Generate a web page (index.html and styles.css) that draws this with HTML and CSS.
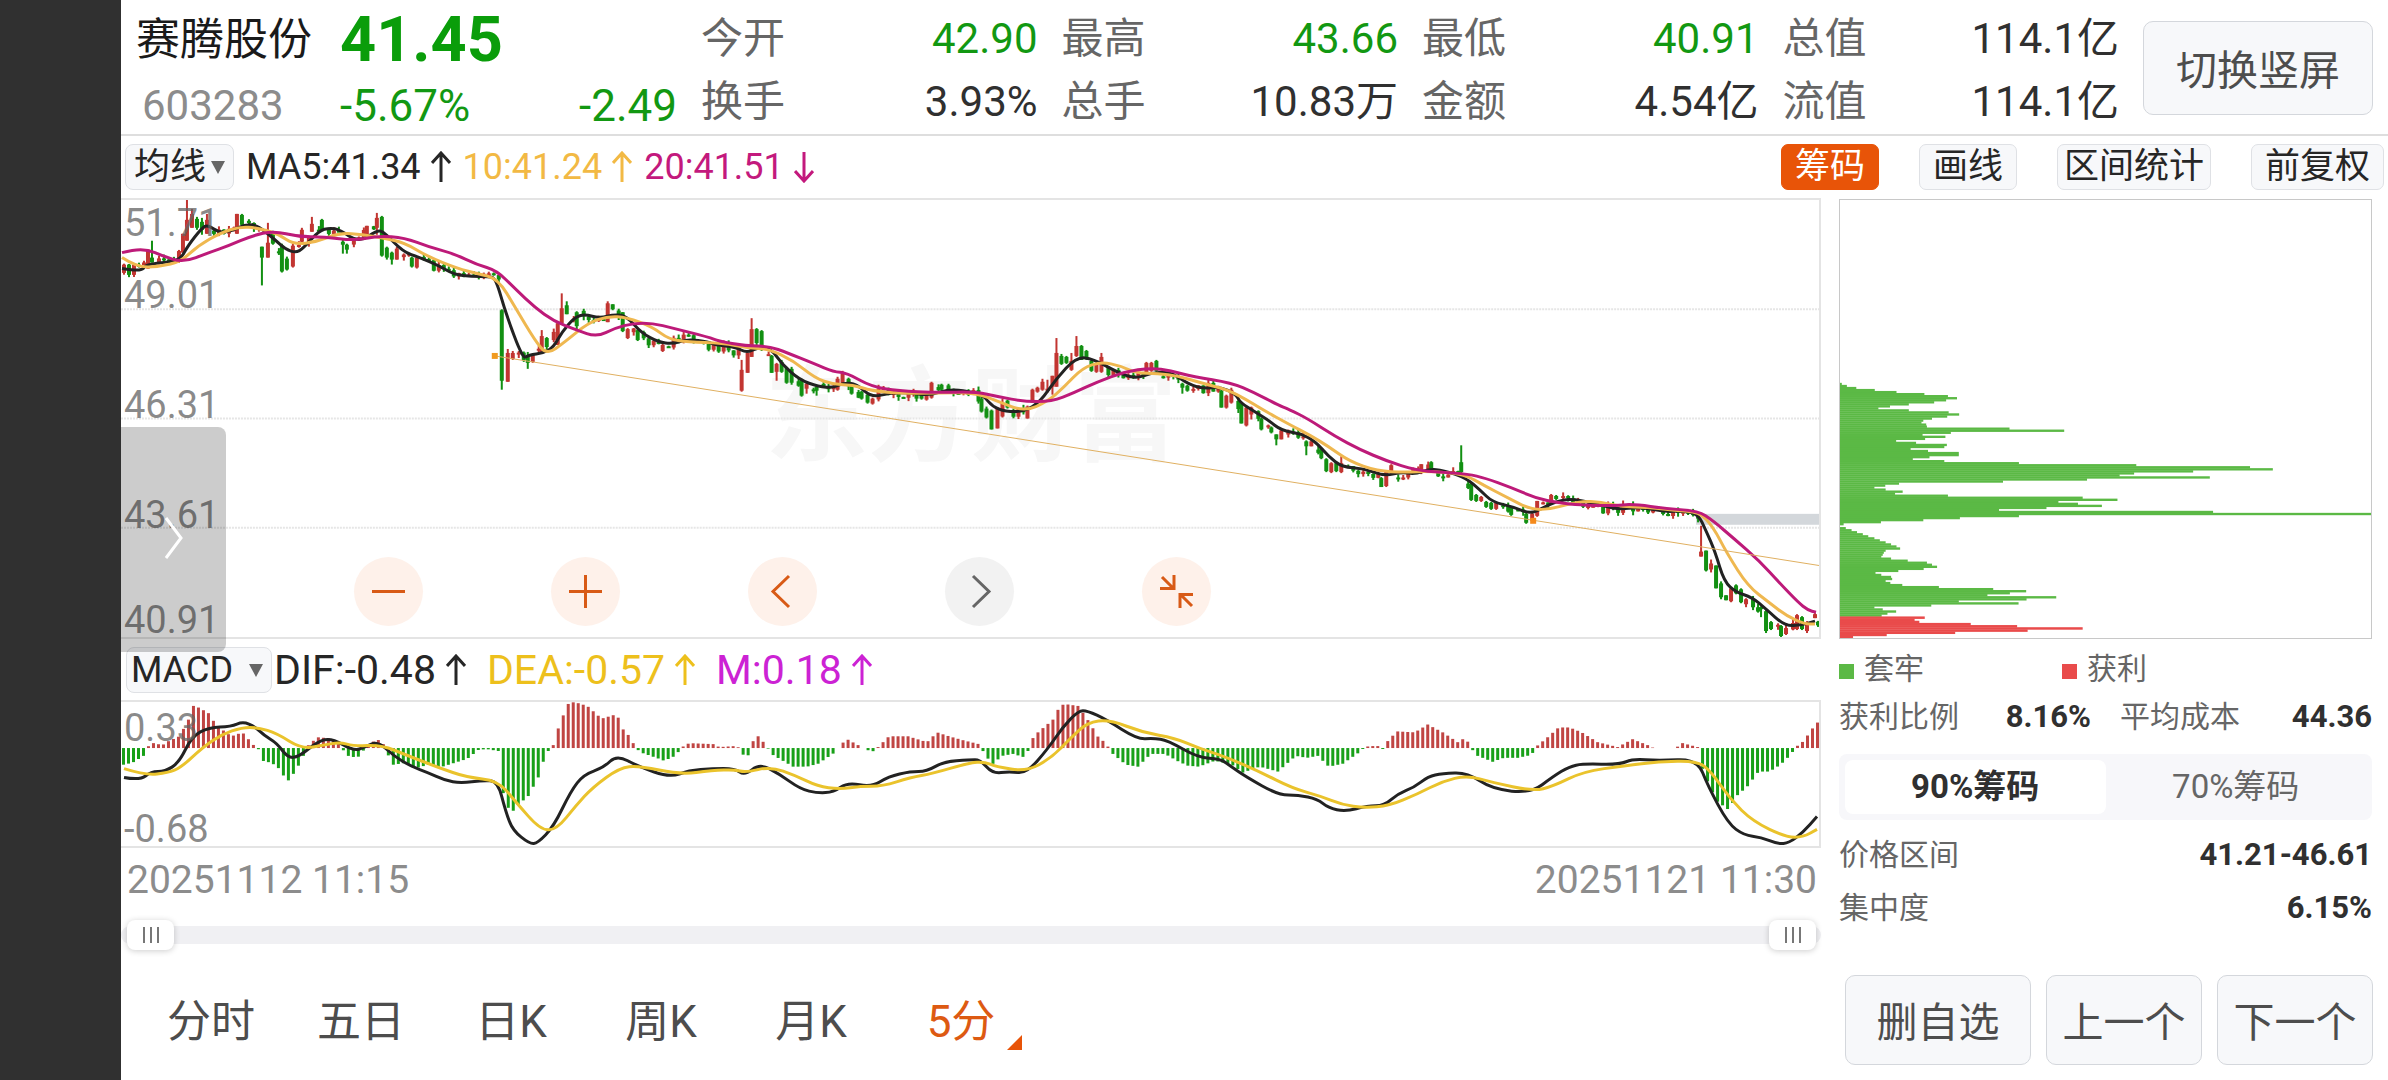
FILE: index.html
```html
<!DOCTYPE html>
<html lang="zh-CN">
<head>
<meta charset="UTF-8">
<meta name="viewport" content="width=device-width, initial-scale=1">
<title>赛腾股份 603283</title>
<link rel="stylesheet" href="styles.css">
</head>
<body>
<div class="page">
	<header class="header">
		<div class="quote">
			<h1 class="name">赛腾股份</h1>
			<div class="price">41.45</div>
			<div class="code">603283</div>
			<div class="change"><span>-5.67%</span><span>-2.49</span></div>
		</div>
		<dl class="stats">
			<div><dt>今开</dt><dd class="down">42.90</dd></div>
			<div><dt>最高</dt><dd class="down">43.66</dd></div>
			<div><dt>最低</dt><dd class="down">40.91</dd></div>
			<div><dt>总值</dt><dd>114.1亿</dd></div>
			<div><dt>换手</dt><dd>3.93%</dd></div>
			<div><dt>总手</dt><dd>10.83万</dd></div>
			<div><dt>金额</dt><dd>4.54亿</dd></div>
			<div><dt>流值</dt><dd>114.1亿</dd></div>
		</dl>
		<button class="btn btn-rotate" type="button">切换竖屏</button>
	</header>

	<div class="toolbar">
		<div class="select select-ma">
			<select aria-label="主图指标"><option>均线</option></select>
		</div>
		<div class="legend legend-ma">
			<span class="c-black">MA5:41.34<svg class="arrow" viewBox="0 0 20 32"><path d="M10 31V2M1 12L10 2L19 12"/></svg></span>
			<span class="c-orange">10:41.24<svg class="arrow" viewBox="0 0 20 32"><path d="M10 31V2M1 12L10 2L19 12"/></svg></span>
			<span class="c-pink">20:41.51<svg class="arrow" viewBox="0 0 20 32"><path d="M10 1V30M1 20L10 30L19 20"/></svg></span>
		</div>
		<div class="tools">
			<button class="chip active" type="button">筹码</button>
			<button class="chip" type="button">画线</button>
			<button class="chip chip-wide" type="button">区间统计</button>
			<button class="chip" type="button">前复权</button>
		</div>
	</div>

	<main class="content">
		<section class="left">
			<div class="chart kline">
				<span class="watermark">东方财富</span>
				<svg id="kline" viewBox="0 0 1699 440" preserveAspectRatio="none"></svg>
				<span class="label l1">51.71</span>
				<span class="label l2">49.01</span>
				<span class="label l3">46.31</span>
				<span class="label l4">43.61</span>
				<span class="label l5">40.91</span>
				<div class="controls">
					<button type="button" aria-label="缩小"><svg viewBox="0 0 69 69"><path d="M18 34.5H51"/></svg></button>
					<button type="button" aria-label="放大"><svg viewBox="0 0 69 69"><path d="M18 34.5H51M34.5 18V51"/></svg></button>
					<button type="button" aria-label="左移"><svg viewBox="0 0 69 69"><path d="M41 19L25 34.5L41 50"/></svg></button>
					<button type="button" class="off" aria-label="右移"><svg viewBox="0 0 69 69"><path d="M28 19L44 34.5L28 50"/></svg></button>
					<button type="button" aria-label="收起"><svg viewBox="0 0 69 69"><path d="M20 20L32 32M18 31.500H32V18M50 49L38 37M51 37.500H38V51"/></svg></button>
				</div>
			</div>
			<button class="drawer" type="button" aria-label="展开"><svg viewBox="0 0 18 42"><path d="M1 1L16 21L1 41"/></svg></button>

			<div class="subbar">
				<div class="select select-macd">
					<select aria-label="副图指标"><option>MACD</option></select>
				</div>
				<div class="legend legend-macd">
					<span class="c-black">DIF:-0.48<svg class="arrow" viewBox="0 0 20 32"><path d="M10 31V2M1 12L10 2L19 12"/></svg></span>
					<span class="c-yellow">DEA:-0.57<svg class="arrow" viewBox="0 0 20 32"><path d="M10 31V2M1 12L10 2L19 12"/></svg></span>
					<span class="c-purple">M:0.18<svg class="arrow" viewBox="0 0 20 32"><path d="M10 31V2M1 12L10 2L19 12"/></svg></span>
				</div>
			</div>
			<div class="chart macd">
				<svg id="macd" viewBox="0 0 1699 147" preserveAspectRatio="none"></svg>
				<span class="label m1">0.33</span>
				<span class="label m2">-0.68</span>
			</div>
			<div class="dates"><time>20251112 11:15</time><time>20251121 11:30</time></div>
			<div class="range">
				<input type="range" min="0" max="100" value="0" aria-label="起始时间">
				<input type="range" min="0" max="100" value="100" aria-label="结束时间">
			</div>
		</section>

		<aside class="right">
			<svg id="chips" viewBox="0 0 1466 1320" preserveAspectRatio="none"></svg>
			<div class="row keys">
				<span class="key green">套牢</span>
				<span class="key red">获利</span>
			</div>
			<div class="row pair">
				<div><span>获利比例</span><b>8.16%</b></div>
				<div><span>平均成本</span><b>44.36</b></div>
			</div>
			<div class="tabs">
				<button type="button" class="active">90%筹码</button>
				<button type="button">70%筹码</button>
			</div>
			<div class="row"><span>价格区间</span><b>41.21-46.61</b></div>
			<div class="row last"><span>集中度</span><b>6.15%</b></div>
		</aside>
	</main>

	<footer class="footer">
		<nav class="periods">
			<button type="button">分时</button>
			<button type="button">五日</button>
			<button type="button">日K</button>
			<button type="button">周K</button>
			<button type="button">月K</button>
			<button type="button" class="active">5分</button>
		</nav>
		<div class="actions">
			<button class="btn btn-del" type="button">删自选</button>
			<button class="btn" type="button">上一个</button>
			<button class="btn" type="button">下一个</button>
		</div>
	</footer>
</div>
<script src="app.js"></script>
</body>
</html>
```

FILE: styles.css
```css
* {
	box-sizing: border-box;
}
body {
	margin: 0;
	background: #fff;
	color: #262626;
	font-family: Roboto, "Noto Sans CJK SC", sans-serif;
}
button, select, input {
	font-family: inherit;
	margin: 0;
	padding: 0;
	border: 0;
	background: none;
	color: inherit;
}
h1, dl, dd {
	margin: 0;
	font-weight: normal;
}
.page {
	display: flex;
	flex-direction: column;
	min-height: 100vh;
	border-left: 121px solid #303030;
}

/* header */
.header {
	display: flex;
	align-items: center;
	gap: 24px;
	height: 136px;
	padding: 6px 15px 0;
	border-bottom: 2px solid #dedede;
}
.quote {
	display: grid;
	grid-template-columns: 204px 337px;
	grid-template-rows: 72px 60px;
	align-items: center;
	line-height: 60px;
}
.name {
	font-size: 44px;
	color: #1a1a1a;
}
.price {
	font-size: 63px;
	font-weight: bold;
	color: #0a9d0a;
}
.code {
	padding-left: 6px;
	font-size: 42px;
	color: #8c8c8c;
}
.change {
	display: flex;
	justify-content: space-between;
	font-size: 44px;
	color: #129812;
}
.stats {
	flex: 1;
	display: grid;
	grid-template-columns: repeat(4, 1fr);
	column-gap: 24px;
}
.stats div {
	display: flex;
	justify-content: space-between;
	line-height: 63px;
	white-space: nowrap;
}
.stats dt {
	font-size: 42px;
	color: #666;
}
.stats dd {
	font-size: 42px;
	color: #303030;
}
.stats .down {
	color: #129812;
}
.btn {
	width: 156px;
	height: 90px;
	padding-bottom: 3px;
	border: 1px solid #d4d7dc;
	border-radius: 10px;
	background: #f7f8fa;
	color: #4d4d4d;
	font-size: 41px;
}
.btn-rotate {
	width: 230px;
	height: 94px;
	margin-bottom: 4px;
}
.btn-del {
	width: 186px;
}

/* indicator bars */
.toolbar {
	display: flex;
	align-items: center;
	height: 62px;
	padding: 0 4px;
}
.select {
	position: relative;
}
.select select {
	width: 100%;
	height: 46px;
	padding-left: 8px;
	border: 1px solid #dfe1e5;
	border-radius: 8px;
	background: #f7f8fa;
	appearance: none;
	font-size: 36px;
	line-height: 42px;
}
.select::after {
	content: "";
	position: absolute;
	top: 17px;
	right: 9px;
	border: 7px solid transparent;
	border-top: 13px solid #666;
	border-bottom: 0;
	pointer-events: none;
}
.select-ma {
	width: 109px;
}
.select-macd {
	width: 146px;
}
.select-macd select {
	padding-left: 4px;
}
.legend {
	display: flex;
	white-space: nowrap;
}
.legend span {
	display: flex;
	align-items: center;
}
.legend-ma {
	gap: 12px;
	margin-left: 12px;
	font-size: 36px;
}
.legend-macd {
	gap: 21px;
	margin-left: 2px;
	font-size: 41px;
	line-height: 46px;
}
.arrow {
	width: 20px;
	height: 32px;
	margin-left: 10px;
	fill: none;
	stroke: currentColor;
	stroke-width: 3;
}
.c-black { color: #262626; }
.c-orange { color: #f2b944; }
.c-pink { color: #c3197d; }
.c-yellow { color: #edc01c; }
.c-purple { color: #cc22d4; }
.tools {
	display: flex;
	gap: 40px;
	margin-left: auto;
}
.chip {
	height: 46px;
	padding: 0 13px;
	border: 1px solid #dfe1e5;
	border-radius: 7px;
	background: #f7f8fa;
	font-size: 35px;
	line-height: 42px;
}
.chip-wide {
	padding: 0 6px;
}
.chip.active {
	border-color: #e85408;
	background: #e85408;
	color: #fff;
}

/* charts */
.content {
	display: flex;
	gap: 18px;
	padding-right: 16px;
}
.left {
	position: relative;
	flex: 1;
	min-width: 0;
}
.chart {
	position: relative;
	border: 2px solid #e4e4e4;
	border-left: 0;
}
.chart svg {
	display: block;
	width: 100%;
	height: 100%;
}
.kline {
	height: 441px;
}
.macd {
	height: 148px;
}
#kline, #macd {
	position: relative;
}
.line {
	fill: none;
	stroke-width: 3;
	stroke-linejoin: round;
	vector-effect: non-scaling-stroke;
}
.label {
	position: absolute;
	left: 3px;
	font-size: 38px;
	line-height: 38px;
	color: rgba(100, 100, 100, .75);
}
.l1 { top: 4px; }
.l2 { top: 76px; }
.l3 { top: 186px; }
.l4 { top: 296px; }
.l5 { top: 401px; }
.m1 { top: 7px; }
.m2 { top: 108px; }
.watermark {
	position: absolute;
	top: 153px;
	left: 644px;
	font-size: 103px;
	font-weight: bold;
	line-height: 130px;
	color: #f7f7f7;
}
.controls {
	position: absolute;
	left: 233px;
	bottom: 11px;
	display: flex;
	gap: 128px;
}
.controls button {
	width: 69px;
	height: 69px;
	border-radius: 50%;
	background: #fef1ea;
	color: #d85a16;
}
.controls .off {
	background: #f2f2f2;
	color: #666;
}
.controls path {
	fill: none;
	stroke: currentColor;
	stroke-width: 3;
}
.drawer {
	position: absolute;
	top: 229px;
	left: 0;
	z-index: 2;
	width: 105px;
	height: 225px;
	border-radius: 0 8px 8px 0;
	background: rgba(0, 0, 0, .2);
}
.drawer svg {
	width: 18px;
	height: 42px;
	fill: none;
	stroke: #fff;
	stroke-width: 3;
}
.subbar {
	display: flex;
	align-items: center;
	height: 61px;
	padding-left: 5px;
}
.dates {
	display: flex;
	justify-content: space-between;
	padding: 0 4px 0 6px;
	font-size: 39px;
	line-height: 64px;
	color: #8c8c8c;
}
.range {
	position: relative;
	height: 18px;
	margin: 14px 0 6px;
	border-radius: 9px;
	background: #f0f0f3;
}
.range input {
	position: absolute;
	top: -6px;
	left: 6px;
	width: calc(100% - 11px);
	height: 30px;
	appearance: none;
	pointer-events: none;
}
.range input::-webkit-slider-thumb {
	appearance: none;
	width: 47px;
	height: 30px;
	border-radius: 8px;
	background: linear-gradient(90deg, #777 2px, transparent 2px 7px, #777 7px 9px, transparent 9px 14px, #777 14px) 50% / 16px 16px no-repeat, #fff;
	box-shadow: 0 1px 6px rgba(0, 0, 0, .2);
	pointer-events: auto;
}

/* cost distribution */
.right {
	width: 533px;
	font-size: 30px;
	color: #666;
}
#chips {
	display: block;
	width: 100%;
	height: 440px;
	margin-top: 1px;
	margin-bottom: 6px;
	border: 1px solid #c8c8c8;
}
.row {
	display: flex;
	justify-content: space-between;
	line-height: 48px;
}
.row b {
	font-size: 31px;
	font-weight: bold;
	color: #303030;
}
.row.last {
	margin-top: 5px;
}
.keys {
	justify-content: flex-start;
}
.key {
	width: 223px;
}
.key::before {
	content: "";
	display: inline-block;
	width: 15px;
	height: 15px;
	margin-right: 10px;
}
.key.green::before { background: #5bb945; }
.key.red::before { background: #e94b4b; }
.pair div {
	display: flex;
	justify-content: space-between;
	width: 252px;
}
.tabs {
	display: flex;
	height: 66px;
	margin: 13px 0 11px;
	padding: 6px;
	border-radius: 8px;
	background: #f7f7fa;
}
.tabs button {
	flex: 1;
	padding-bottom: 6px;
	border-radius: 8px;
	font-size: 33px;
	color: #666;
}
.tabs .active {
	background: #fff;
	color: #303030;
	font-weight: bold;
}

/* footer */
.footer {
	display: flex;
	align-items: center;
	justify-content: space-between;
	margin-top: auto;
	padding: 0 15px 15px;
}
.periods {
	display: flex;
}
.periods button {
	position: relative;
	width: 150px;
	height: 90px;
	padding-bottom: 4px;
	font-size: 44px;
	color: #4d4d4d;
}
.periods .active {
	color: #dd5a12;
}
.periods .active::after {
	content: "";
	position: absolute;
	right: 14px;
	bottom: 15px;
	border-left: 15px solid transparent;
	border-bottom: 15px solid #e85408;
}
.actions {
	display: flex;
	gap: 15px;
}
```

FILE: app.js
```js
var RED = '#c23531', GREEN = '#129012';

var ma5 = [[1,69],[14,71],[22,70],[25,65],[50,62],[60,59],[67,46],[81,28],[87,25],[98,33],[111,31],[123,25],[136,25],[154,40],[165,50],[175,53],[182,49],[198,31],[209,28],[219,30],[238,43],[257,30],[264,33],[282,52],[299,58],[318,66],[333,75],[351,77],[368,77],[375,79],[385,114],[402,160],[408,156],[423,154],[433,148],[441,133],[454,118],[464,115],[479,119],[494,115],[506,117],[521,134],[538,143],[552,145],[567,140],[588,143],[594,146],[615,148],[626,154],[636,149],[650,149],[661,165],[679,181],[698,188],[713,189],[723,184],[736,185],[751,199],[770,194],[790,194],[809,197],[830,190],[855,194],[864,198],[872,208],[885,213],[904,213],[920,203],[935,181],[956,158],[973,160],[996,173],[1015,180],[1031,174],[1050,173],[1069,186],[1084,190],[1099,188],[1115,195],[1120,204],[1134,213],[1147,221],[1161,232],[1180,235],[1195,243],[1208,258],[1222,269],[1243,270],[1264,278],[1281,274],[1295,276],[1309,271],[1323,272],[1346,280],[1360,292],[1372,304],[1393,309],[1410,316],[1423,310],[1437,303],[1451,301],[1474,305],[1497,312],[1520,309],[1544,314],[1562,313],[1578,316],[1586,333],[1595,354],[1604,384],[1616,395],[1632,400],[1646,412],[1665,429],[1681,428],[1695,424]];
var ma10 = [[1,58],[16,68],[39,67],[60,62],[77,46],[100,33],[119,27],[136,28],[157,34],[173,45],[196,42],[219,33],[242,35],[261,38],[284,43],[307,57],[337,69],[356,74],[377,79],[395,109],[414,141],[426,156],[444,143],[467,124],[487,117],[506,118],[532,128],[548,140],[567,143],[602,144],[627,149],[648,150],[673,162],[694,179],[713,186],[732,186],[751,192],[782,195],[816,194],[855,194],[878,203],[904,213],[927,203],[943,189],[962,169],[981,163],[1000,167],[1015,174],[1038,175],[1057,177],[1080,184],[1107,191],[1126,201],[1142,211],[1169,226],[1190,237],[1208,248],[1229,263],[1257,273],[1285,274],[1309,273],[1344,276],[1365,288],[1386,299],[1411,312],[1432,311],[1460,303],[1481,304],[1502,309],[1527,309],[1555,313],[1579,314],[1593,329],[1607,356],[1628,389],[1650,406],[1667,419],[1685,427],[1695,427]];
var ma20 = [[1,53],[12,50],[27,50],[41,56],[62,63],[88,53],[108,46],[131,36],[153,31],[177,37],[203,37],[234,41],[257,36],[284,38],[307,47],[333,54],[356,65],[376,71],[395,90],[414,108],[433,122],[456,131],[476,138],[494,129],[513,124],[532,124],[552,129],[588,138],[598,142],[625,147],[648,147],[667,154],[694,165],[713,173],[726,174],[751,188],[778,192],[816,194],[855,193],[878,198],[904,203],[931,203],[954,194],[977,183],[1004,173],[1031,169],[1050,172],[1073,178],[1111,184],[1134,194],[1157,206],[1169,211],[1187,220],[1215,238],[1239,251],[1267,263],[1295,272],[1320,274],[1348,276],[1365,280],[1390,289],[1415,300],[1439,305],[1460,307],[1492,308],[1513,306],[1548,311],[1578,313],[1593,323],[1614,341],[1639,363],[1660,386],[1678,405],[1688,413],[1696,415]];

// wide candles: x, high, low, body top, body bottom, up
var spikes = [[27,50,69,50,69,1],[31,41,63,58,63,0],[62,34,53,34,53,1],[66,0,41,20,41,1],[71,9,28,14,28,1],[76,17,30,19,28,0],[81,18,35,22,30,0],[86,14,34,20,34,1],[116,14,34,14,34,1],[121,14,26,15,25,0],[141,47,86,47,58,0],[147,23,58,43,58,1],[152,31,45,33,44,0],[161,44,73,46,72,0],[166,57,71,59,70,0],[172,44,68,46,67,1],[181,28,43,30,42,1],[191,17,32,24,32,1],[201,19,30,20,30,0],[222,40,54,42,45,0],[226,44,54,45,50,0],[246,26,35,26,35,1],[256,13,35,18,28,1],[261,16,57,17,56,0],[266,47,60,48,58,0],[271,52,65,53,60,0],[276,47,60,49,60,1],[291,57,68,58,67,0],[296,58,69,58,68,1],[381,110,191,111,182,0],[387,150,183,154,183,1],[392,152,161,154,160,1],[407,153,170,156,164,0],[412,155,164,156,163,1],[421,131,153,137,153,1],[426,138,152,139,148,0],[437,124,146,124,146,1],[441,94,124,109,124,1],[446,102,115,106,115,0],[456,112,130,113,127,0],[487,102,123,104,123,1],[492,105,111,105,110,0],[502,113,133,113,132,0],[507,129,140,130,139,1],[517,129,142,131,141,0],[542,144,153,146,152,1],[621,161,193,171,192,1],[627,154,174,154,174,1],[631,119,158,130,158,1],[636,129,147,130,144,0],[641,131,152,132,150,0],[651,156,174,157,174,0],[656,164,182,165,173,1],[661,161,174,163,173,0],[666,168,185,169,184,0],[671,168,186,170,184,0],[681,180,198,181,197,0],[686,184,195,185,190,1],[696,187,197,188,192,0],[717,178,192,180,191,1],[722,172,186,175,185,1],[731,186,196,187,195,0],[741,192,201,193,200,0],[747,194,205,196,204,0],[752,199,206,200,205,1],[796,194,203,195,200,0],[801,194,201,195,200,0],[806,193,202,194,201,1],[811,183,200,184,199,1],[821,185,193,186,191,0],[861,198,214,200,213,0],[866,208,220,210,219,0],[871,211,231,212,231,0],[877,209,230,209,230,1],[882,200,219,204,218,1],[887,201,210,202,209,0],[907,207,220,208,220,1],[912,190,204,191,204,1],[917,188,194,189,193,1],[922,180,192,183,191,1],[927,181,194,190,192,1],[932,177,196,177,188,1],[936,139,188,154,188,1],[941,155,166,157,165,0],[946,157,165,158,164,0],[951,154,172,162,171,1],[956,137,158,147,157,1],[961,146,161,147,161,0],[966,151,161,152,160,0],[971,161,173,162,172,0],[976,164,174,165,173,1],[981,154,174,158,173,1],[1026,163,175,164,174,1],[1031,163,173,164,172,1],[1036,161,173,162,172,0],[1062,184,195,185,189,0],[1067,186,193,187,192,0],[1101,191,209,192,209,0],[1106,196,210,197,209,1],[1111,189,205,191,204,1],[1121,204,225,205,225,0],[1126,208,228,209,227,1],[1131,208,221,209,216,1],[1141,219,232,220,231,0],[1151,228,235,229,234,0],[1156,236,247,236,241,0],[1161,231,241,232,241,1],[1186,242,257,243,248,0],[1191,242,248,243,248,1],[1201,249,261,250,260,0],[1206,260,274,261,273,0],[1211,264,275,265,274,1],[1216,264,274,265,273,0],[1221,258,275,265,274,1],[1261,279,289,280,289,0],[1266,272,289,273,288,1],[1271,266,276,267,275,1],[1301,266,276,266,275,1],[1311,263,273,264,272,0],[1341,247,275,264,274,0],[1351,284,303,286,302,0],[1356,296,304,297,303,0],[1361,298,304,299,303,1],[1366,303,310,304,309,0],[1371,304,312,305,311,0],[1376,304,312,305,311,1],[1391,309,318,310,317,0],[1406,314,326,316,325,0],[1412,314,324,316,323,1],[1417,303,319,303,318,1],[1431,296,306,297,306,1],[1436,297,302,298,301,0],[1581,328,359,354,359,1],[1586,353,374,353,373,0],[1591,362,375,366,372,1],[1596,368,391,368,391,0],[1601,384,402,386,400,0],[1606,398,403,398,403,0],[1611,391,405,391,404,1],[1616,387,397,388,396,0],[1621,391,406,392,405,0],[1626,401,410,402,407,1],[1641,409,420,410,412,0],[1646,413,436,414,434,0],[1651,424,433,425,432,0],[1661,428,440,429,439,0],[1666,426,438,431,437,1],[1677,417,433,418,432,1],[1682,419,433,420,432,0],[1687,424,436,426,434,1],[1695,416,421,417,421,1]];

var hist = [[2,-17],[11,-15],[22,-8],[24,0],[32,5],[41,3],[47,7],[58,12],[67,29],[72,43],[78,41],[88,35],[93,26],[103,17],[110,12],[121,16],[127,9],[133,2],[138,-2],[143,-16],[148,-14],[156,-19],[162,-28],[167,-33],[173,-25],[177,-18],[182,-8],[186,2],[196,11],[208,10],[217,6],[220,0],[227,-8],[236,-10],[241,-4],[246,3],[256,9],[262,4],[264,0],[268,-10],[272,-17],[285,-15],[293,-21],[307,-17],[318,-20],[346,-11],[357,-2],[365,-1],[377,-3],[382,-46],[387,-61],[392,-64],[398,-57],[407,-49],[417,-30],[422,-14],[427,-3],[432,3],[437,20],[443,36],[447,45],[453,47],[466,43],[477,33],[483,30],[491,34],[497,31],[502,19],[510,10],[514,0],[521,-5],[538,-11],[543,-13],[554,-8],[561,1],[568,5],[592,4],[598,1],[614,2],[619,0],[623,-9],[628,-7],[631,6],[637,12],[645,3],[650,-6],[672,-19],[686,-19],[697,-16],[713,-5],[719,3],[726,9],[737,3],[742,0],[751,-4],[756,0],[768,12],[787,12],[806,6],[816,16],[828,12],[842,8],[858,4],[860,0],[871,-17],[881,-8],[892,-6],[902,-9],[907,-3],[911,9],[917,16],[932,29],[938,41],[943,45],[957,43],[962,36],[968,27],[978,10],[984,6],[988,0],[992,-6],[1005,-17],[1017,-19],[1030,-6],[1044,-6],[1058,-14],[1067,-18],[1078,-19],[1094,-13],[1111,-17],[1122,-25],[1139,-19],[1157,-24],[1175,-8],[1186,-10],[1197,-8],[1208,-19],[1222,-16],[1239,-4],[1243,0],[1248,2],[1258,2],[1262,-1],[1266,6],[1276,17],[1294,16],[1307,24],[1322,16],[1337,6],[1342,9],[1348,6],[1351,-1],[1357,-8],[1372,-14],[1383,-10],[1397,-10],[1411,-7],[1415,1],[1427,11],[1438,21],[1449,21],[1461,16],[1477,6],[1497,1],[1512,9],[1527,3],[1533,0],[1555,0],[1562,5],[1577,1],[1580,-16],[1587,-34],[1596,-54],[1608,-63],[1616,-49],[1627,-39],[1638,-24],[1649,-24],[1660,-17],[1671,-6],[1674,0],[1683,7],[1692,20],[1697,26]];
var dif = [[3,77],[19,80],[30,71],[44,71],[58,62],[71,35],[88,26],[110,25],[122,20],[134,25],[143,34],[156,42],[167,57],[178,56],[197,40],[211,37],[233,50],[244,46],[257,40],[274,56],[291,66],[307,72],[324,80],[340,83],[362,80],[377,81],[385,112],[392,131],[409,145],[417,144],[433,127],[450,91],[463,74],[483,67],[496,54],[518,66],[549,77],[568,70],[592,68],[614,68],[624,75],[639,63],[658,73],[680,89],[697,93],[713,92],[727,82],[751,87],[768,76],[790,71],[806,71],[823,61],[849,59],[860,59],[872,73],[889,71],[906,73],[928,47],[942,26],[958,9],[967,9],[986,18],[1017,38],[1033,37],[1047,39],[1078,57],[1100,58],[1111,66],[1125,76],[1158,95],[1178,95],[1197,99],[1208,108],[1225,112],[1247,106],[1264,106],[1277,94],[1294,87],[1308,76],[1322,73],[1347,72],[1372,89],[1411,93],[1433,76],[1449,66],[1463,63],[1499,64],[1513,58],[1538,60],[1577,58],[1588,86],[1608,124],[1624,136],[1641,138],[1658,145],[1669,144],[1683,133],[1697,117]];
var dea = [[3,68],[25,75],[47,72],[60,67],[82,46],[101,33],[121,26],[137,26],[156,32],[181,48],[203,44],[219,41],[233,45],[261,44],[285,54],[318,67],[346,77],[377,80],[395,102],[420,131],[436,130],[455,106],[472,87],[499,67],[518,65],[559,74],[592,70],[614,69],[625,72],[650,66],[675,75],[697,86],[719,89],[740,86],[762,86],[790,77],[812,73],[849,62],[864,61],[875,66],[906,71],[931,57],[950,37],[967,21],[989,18],[1022,31],[1055,37],[1078,47],[1105,56],[1139,71],[1172,88],[1200,96],[1222,105],[1244,108],[1269,106],[1297,94],[1322,81],[1347,75],[1372,82],[1413,91],[1433,86],[1463,71],[1505,65],[1538,61],[1577,60],[1591,71],[1610,99],[1633,122],[1666,138],[1683,138],[1697,130]];

var trapped = [5,19,45,96,156,233,298,323,293,260,190,138,106,190,300,329,296,254,230,225,238,240,468,619,306,228,291,235,155,210,295,288,195,243,328,328,247,201,288,494,818,1132,1195,975,812,772,1021,682,450,163,125,95,126,173,152,298,670,766,603,657,723,570,439,1030,1466,494,331,230,113,10,0,16,32,47,63,78,95,110,126,141,156,166,126,121,118,114,141,187,240,254,268,231,161,98,114,141,144,126,139,172,273,423,514,469,407,597,515,328,493,252,95,118,155,131,115];
var profit = [234,206,219,361,489,670,518,318,129,36];

function at(pts, x) {
	for (var i = 1; i < pts.length; i++) {
		if (x <= pts[i][0]) {
			var a = pts[i - 1], b = pts[i];
			return a[1] + (b[1] - a[1]) * (x - a[0]) / (b[0] - a[0]);
		}
	}
	return pts[pts.length - 1][1];
}
function noise(i) {
	var v = Math.sin(i * 12.9898) * 43758.5453;
	return v - Math.floor(v) - 0.5;
}
function rect(x, y, w, h, c) {
	return '<rect x="' + x + '" y="' + y + '" width="' + w + '" height="' + h + '" fill="' + c + '"/>';
}
// smooth path through the midpoints
function line(pts, c) {
	var d = 'M' + pts[0];
	for (var i = 1; i < pts.length - 1; i++) {
		d += 'Q' + pts[i] + ' ' + (pts[i][0] + pts[i + 1][0]) / 2 + ',' + (pts[i][1] + pts[i + 1][1]) / 2;
	}
	d += 'L' + pts[pts.length - 1];
	return '<path class="line" d="' + d + '" stroke="' + c + '"/>';
}
function candle(x, hi, lo, top, bottom, up) {
	var c = up ? RED : GREEN;
	return rect(x - 1, hi, 2, lo - hi, c) + rect(x - 2, top, 4, Math.max(bottom - top, 2), c);
}

function price(x) {
	if (x < 379) return at(ma5, Math.min(x + 8, 375));
	if (x < 404) return at(ma5, 404);
	if (x < 1579) return at(ma5, Math.min(x + 8, 1577));
	return at(ma5, x + 8);
}

function drawKline() {
	var s = '';
	[110, 220, 330].forEach(function(y) {
		s += '<path d="M0 ' + y + 'H1699" stroke="#e6e6e6" stroke-width="2" stroke-dasharray="2 1"/>';
	});
	s += rect(1576, 316, 123, 11, '#d3d7db');
	var prev = price(2) + 3;
	for (var i = 0; i < 340; i++) {
		var x = 3 + i * 5;
		var close = price(x) + noise(i) * 11;
		var taken = spikes.some(function(k) { return Math.abs(k[0] - x) < 3; });
		if (!taken) {
			var top = Math.min(prev, close), bottom = Math.max(prev, close);
			if (bottom - top > 14) bottom = top + 10;
			s += candle(x, top - Math.abs(noise(i + 500)) * 8, bottom + Math.abs(noise(i + 900)) * 8, top, bottom, close < prev);
		}
		prev = close;
	}
	spikes.forEach(function(k) { s += candle.apply(null, k); });
	s += line(ma5, '#222') + line(ma10, '#efb850') + line(ma20, '#bd1a79');
	s += '<path d="M374 157L1699 368" stroke="#e0b060"/>';
	s += rect(371, 154, 6, 6, '#f09a20') + rect(1410, 320, 6, 6, '#f58a1a');
	document.getElementById('kline').innerHTML = s;
}

function drawMacd() {
	var s = '';
	for (var i = 0; i < 340; i++) {
		var x = 2 + i * 5;
		var v = at(hist, x);
		if (Math.abs(v) < 0.5) continue;
		s += rect(x - 1, v > 0 ? 47 - v : 47, 3, Math.abs(v), v > 0 ? '#c04543' : '#18a018');
	}
	s += line(dif, '#222') + line(dea, '#eac32c');
	document.getElementById('macd').innerHTML = s;
}

function drawChips() {
	var s = '', h = 704 / trapped.length, r = 65 / profit.length;
	trapped.forEach(function(v, i) { s += rect(0, 551 + i * h, v, h + 1, '#5bb945'); });
	profit.forEach(function(v, i) { s += rect(0, 1255 + i * r, v, r + 1, '#e94b4b'); });
	document.getElementById('chips').innerHTML = s;
}

drawKline();
drawMacd();
drawChips();
```
